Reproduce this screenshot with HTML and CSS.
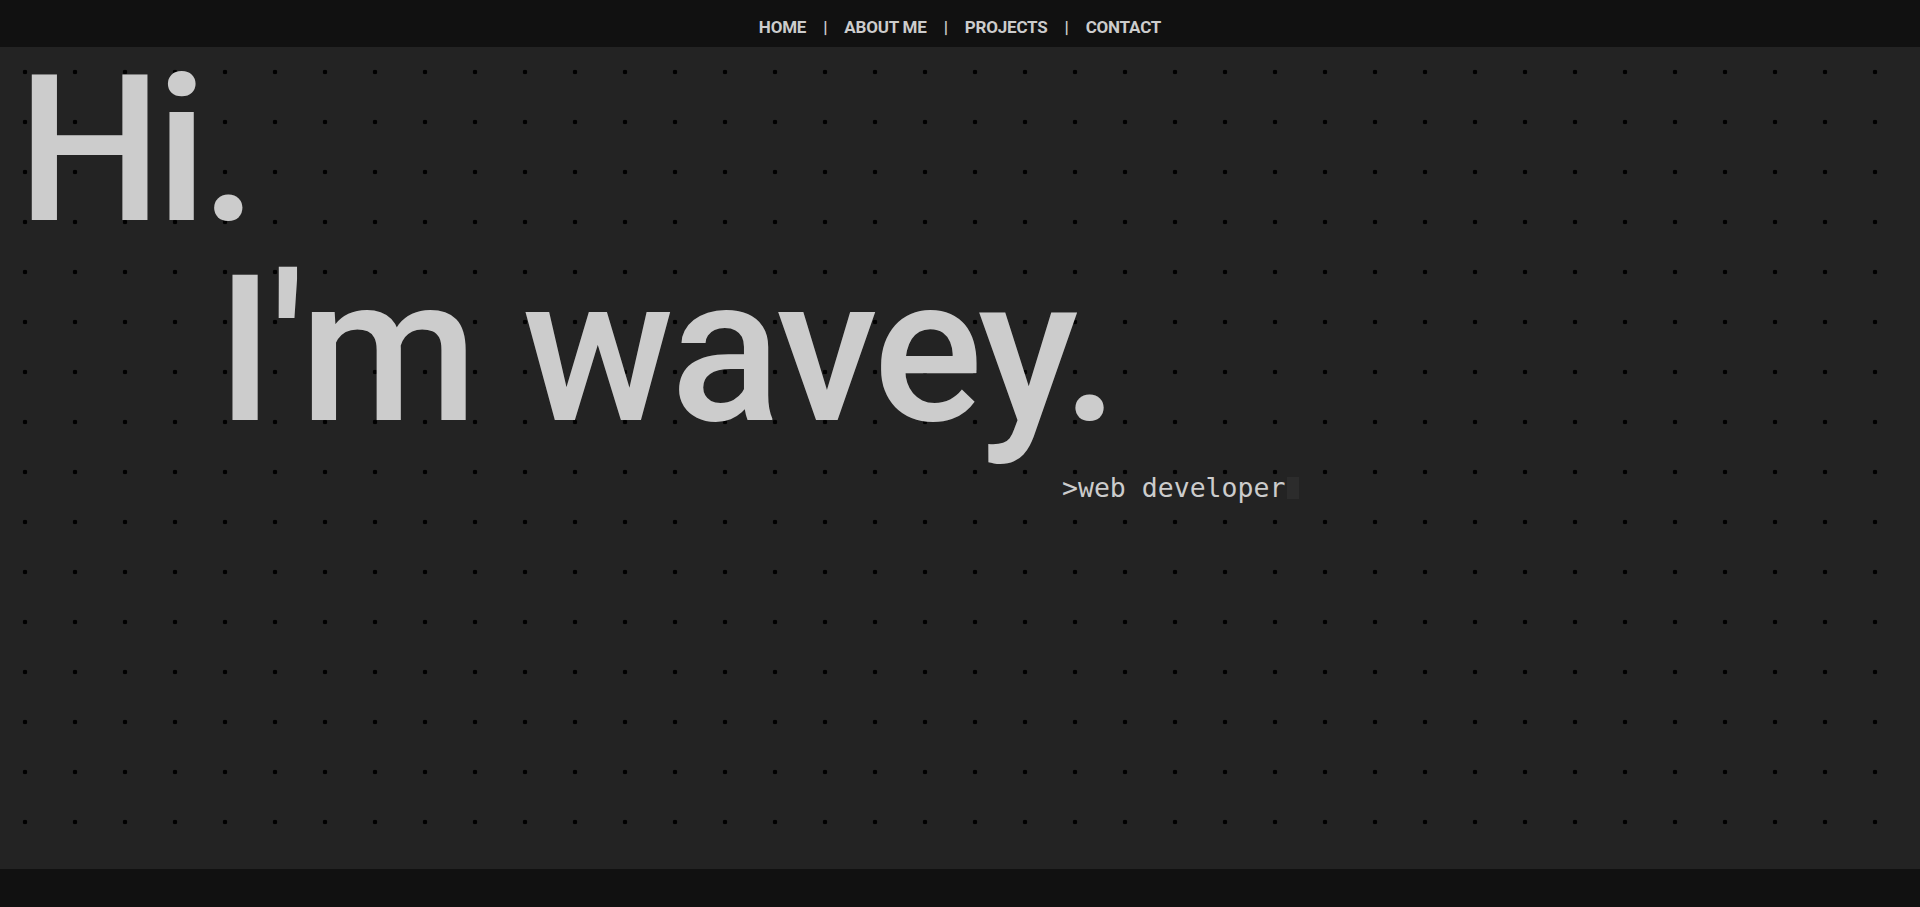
FILE: index.html
```html
<!DOCTYPE html>
<html lang="en">
<head>
<meta charset="utf-8">
<title>wavey</title>
<link rel="stylesheet" href="styles.css">
</head>
<body>
<header class="topbar">
  <nav class="nav">
    <a class="nav-link" href="#">HOME</a>
    <span class="sep">|</span>
    <a class="nav-link" href="#">ABOUT ME</a>
    <span class="sep">|</span>
    <a class="nav-link" href="#">PROJECTS</a>
    <span class="sep">|</span>
    <a class="nav-link" href="#">CONTACT</a>
  </nav>
</header>
<main class="hero">
  <h1 class="hi">Hi.</h1>
  <h1 class="intro">I'm wavey.</h1>
  <p class="role">&gt;web developer<span class="cursor"></span></p>
</main>
<footer class="bottom"></footer>
</body>
</html>
```
FILE: styles.css
```css
html, body {
  margin: 0;
  padding: 0;
  height: 100%;
}
body {
  display: flex;
  flex-direction: column;
  background: #111111;
  color: #cccccc;
  font-family: "Roboto", "Liberation Sans", sans-serif;
}
.topbar {
  height: 47px;
  flex: none;
  background: #111111;
  display: flex;
  justify-content: center;
  align-items: center;
}
.nav {
  display: flex;
  align-items: center;
  gap: 17px;
  font-size: 17px;
  font-weight: 700;
  padding-top: 6px;
  letter-spacing: -0.2px;
}
.nav-link {
  color: #cccccc;
  text-decoration: none;
}
.sep {
  font-weight: 700;
}
.hero {
  flex: 1;
  background-color: #232323;
  background-image: radial-gradient(circle at 25px 25px, #000000 2px, rgba(0,0,0,0) 2.6px);
  background-size: 50px 50px;
  padding: 3px 0 0 17px;
  overflow: hidden;
}
.hi, .intro {
  margin: 0;
  font-size: 205px;
  font-weight: 500;
  line-height: 200px;
  letter-spacing: -3.5px;
}
.hi {
  letter-spacing: -7px;
}
.intro {
  padding-left: 199px;
}
.role {
  margin: 22px 0 0 0;
  padding-left: 1045px;
  font-family: "DejaVu Sans Mono", "Liberation Mono", monospace;
  font-size: 26.5px;
  letter-spacing: 0;
  display: flex;
  align-items: center;
}
.cursor {
  display: inline-block;
  width: 12px;
  height: 22px;
  background: #2c2c2c;
  margin-left: 2px;
}
.bottom {
  height: 38px;
  flex: none;
  background: #111111;
}
```
